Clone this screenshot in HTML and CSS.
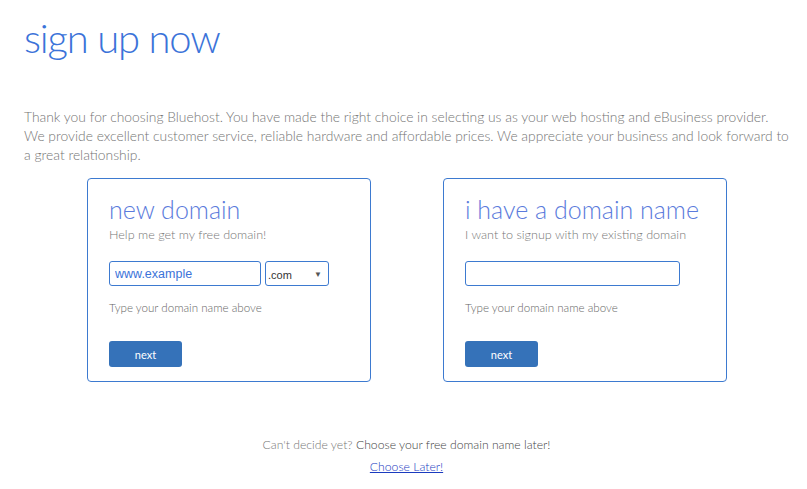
FILE: index.html
```html
<!DOCTYPE html>
<html lang="en">

<head>
    <meta charset="UTF-8">
    <meta name="viewport" content="width=device-width, initial-scale=1.0">
    <title>Sign Up Now</title>
    <link rel="stylesheet" href="styles.css">
</head>

<body>
    <div id="page">
        <h1 class="page-title">sign up now</h1>

        <p class="intro">
            Thank you for choosing Bluehost. You have made the right choice in selecting us as your web hosting and eBusiness provider.<br>
            We provide excellent customer service, reliable hardware and affordable prices. We appreciate your business and look forward to<br>
            a great relationship.
        </p>

        <div id="domain-boxes">
            <div class="domain-box">
                <h2 class="box-title">new domain</h2>
                <p class="box-subtitle">Help me get my free domain!</p>
                <div class="field-row">
                    <input type="text" class="domain-input short" value="www.example">
                    <div class="tld-select">
                        <span>.com</span>
                        <span class="arrow">&#9660;</span>
                    </div>
                </div>
                <p class="hint">Type your domain name above</p>
                <button class="next-button">next</button>
            </div>

            <div class="domain-box">
                <h2 class="box-title">i have a domain name</h2>
                <p class="box-subtitle">I want to signup with my existing domain</p>
                <div class="field-row">
                    <input type="text" class="domain-input long" value="">
                </div>
                <p class="hint">Type your domain name above</p>
                <button class="next-button">next</button>
            </div>
        </div>

        <div id="decide-later">
            <p><span class="muted">Can't decide yet?</span> Choose your free domain name later!</p>
            <a href="#" class="later-link">Choose Later!</a>
        </div>
    </div>
</body>

</html>
```

FILE: styles.css
```css
body {
    margin: 0;
    padding: 0;
    font-family: Lato, "Open Sans", sans-serif;
    font-weight: 300;
    background-color: white;
    color: #666666;
}

#page {
    padding: 0 8px 0 24px;
}

.page-title {
    margin: 0;
    padding-top: 14px;
    font-size: 40px;
    font-weight: 300;
    letter-spacing: -1.2px;
    line-height: 48px;
    color: #3b73d9;
}

.intro {
    margin: 45px 0 0 0;
    font-size: 13.85px;
    line-height: 19px;
    color: #757575;
    white-space: nowrap;
}

#domain-boxes {
    display: flex;
    gap: 72px;
    margin-top: 14px;
    padding-left: 63px;
}

.domain-box {
    width: 284px;
    height: 204px;
    box-sizing: border-box;
    border: 1px solid #3d7ad0;
    border-radius: 4px;
    padding: 16px 21px 0 21px;
}

.box-title {
    margin: 0;
    font-size: 25px;
    font-weight: 300;
    line-height: 28px;
    color: #5b7bdc;
}

.box-subtitle {
    margin: 3px 0 0 0;
    font-size: 12.6px;
    line-height: 18px;
    color: #777777;
}

.field-row {
    display: flex;
    gap: 4px;
    margin-top: 17px;
}

.domain-input {
    height: 25px;
    box-sizing: border-box;
    border: 1px solid #3d7ad0;
    border-radius: 3px;
    padding: 0 5px;
    font-family: "Liberation Sans", Arial, sans-serif;
    font-size: 12.5px;
    color: #3b73d9;
    outline: none;
}

.domain-input.short {
    width: 152px;
}

.domain-input.long {
    width: 215px;
}

.tld-select {
    width: 64px;
    height: 25px;
    box-sizing: border-box;
    border: 1px solid #3d7ad0;
    border-radius: 3px;
    display: flex;
    align-items: center;
    justify-content: space-between;
    padding: 2px 6px 0 2px;
    font-family: "Liberation Sans", Arial, sans-serif;
    font-size: 11px;
    color: #333333;
}

.tld-select .arrow {
    font-size: 8px;
    color: #555555;
}

.hint {
    margin: 14px 0 0 0;
    font-size: 11.6px;
    line-height: 16px;
    color: #666666;
}

.next-button {
    margin-top: 25px;
    width: 73px;
    height: 26px;
    border: none;
    border-radius: 3px;
    background-color: #3572b9;
    color: white;
    font-family: Lato, "Open Sans", sans-serif;
    font-size: 11px;
    cursor: pointer;
}

#decide-later {
    margin-top: 54px;
    padding-right: 10px;
    text-align: center;
    font-size: 12.2px;
}

#decide-later p {
    margin: 0;
    line-height: 18px;
    color: #444444;
}

#decide-later .muted {
    color: #777777;
}

.later-link {
    display: inline-block;
    margin-top: 5px;
    color: #1a3bbf;
}
```
